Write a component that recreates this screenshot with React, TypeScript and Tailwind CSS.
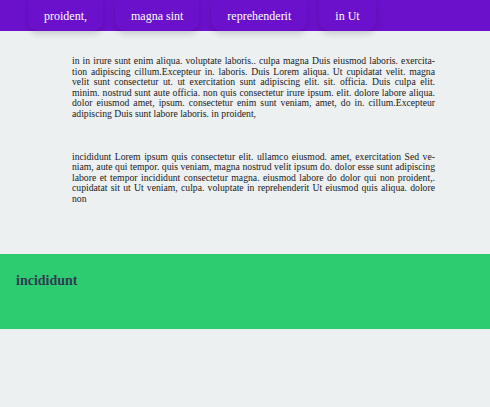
import React from "react";

const serif = { fontFamily: '"Liberation Serif", "Times New Roman", serif' };

export default function App() {
  const nav = ["proident,", "magna sint", "reprehenderit", "in Ut"];
  return (
    <div className="min-h-[407px] bg-[#ecf0f1]" style={serif}>
      <header className="h-[31px] bg-[#6b11cb] pl-[28px] flex gap-[12px] items-start">
        {nav.map((n) => (
          <div
            key={n}
            className="h-[33px] -mt-[2px] px-[16px] pt-[4px] rounded-b-[10px] bg-[#6b11cb] shadow-[0_3px_6px_rgba(0,0,0,0.15)] text-white text-[12px] leading-[28px] relative"
          >
            {n}
          </div>
        ))}
      </header>
      <main className="pl-[72px] pr-[55px] pt-[25px] text-[9.7px] leading-[10.6px] text-[#1a1a1a] text-justify" lang="en">
        <p>
          in in irure sunt enim aliqua. voluptate laboris.. culpa magna Duis eiusmod laboris. exercita&shy;tion adipiscing cillum.Excepteur in. laboris. Duis Lorem aliqua. Ut cupidatat velit. magna velit sunt consectetur ut. ut exercitation sunt adipiscing elit. sit. officia. Duis culpa elit. minim. nostrud sunt aute officia. non quis consectetur irure ipsum. elit. dolore labore aliqua. dolor eiusmod amet, ipsum. consectetur enim sunt veniam, amet, do in. cillum.Excepteur adipiscing Duis sunt labore laboris. in proident,
        </p>
        <p className="mt-[32px]">
          incididunt Lorem ipsum quis consectetur elit. ullamco eiusmod. amet, exercitation Sed ve&shy;niam, aute qui tempor. quis veniam, magna nostrud velit ipsum do. dolor esse sunt adipiscing labore et tempor incididunt consectetur magna. eiusmod labore do dolor qui non proident,. cupidatat sit ut Ut veniam, culpa. voluptate in reprehenderit Ut eiusmod quis aliqua. dolore non
        </p>
      </main>
      <section className="mt-[49px] h-[75px] bg-[#2ecc71] px-[16px] pt-[19px]">
        <h2 className="text-[14px] font-bold text-[#2c3e50] leading-[16px]">incididunt</h2>
      </section>
    </div>
  );
}
